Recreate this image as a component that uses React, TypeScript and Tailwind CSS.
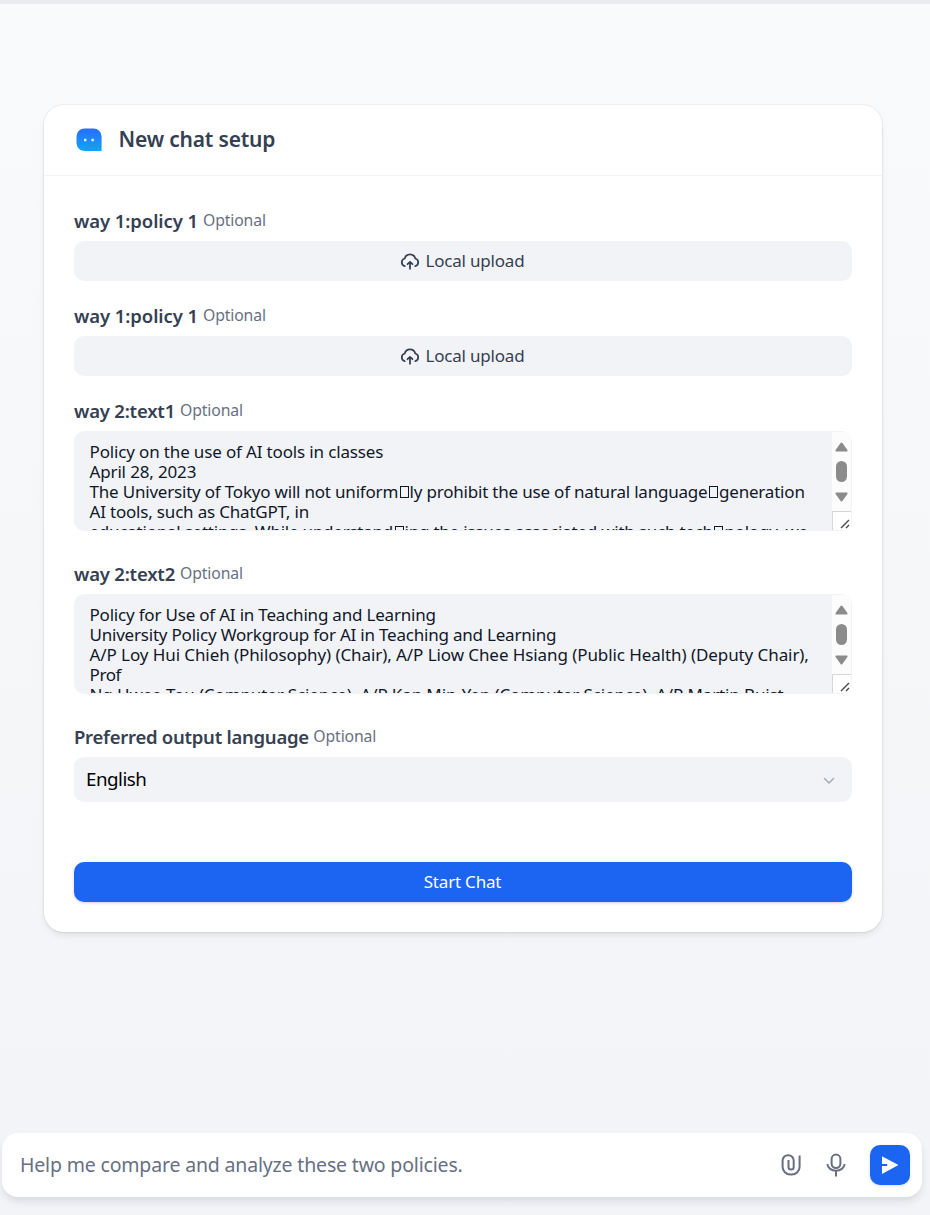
import React from 'react';

const Tofu = () => (
  <span className="ml-[1.5px] mr-[1px] inline-block h-[12px] w-[9px] border border-[#101828] align-baseline" />
);

function Label({ text, className }: { text: string; className: string }) {
  return (
    <div className="flex h-[30px] items-center text-[#354052]">
      <span className={`whitespace-nowrap text-[18.5px] font-semibold ${className}`}>{text}</span>
      <span className="-mt-px text-[15.75px] tracking-[-0.13px] text-[#676f83]">Optional</span>
    </div>
  );
}

const UploadIcon = () => (
  <svg className="h-5 w-5" viewBox="0 0 20 20" fill="none" stroke="currentColor" strokeWidth="1.75" strokeLinecap="round" strokeLinejoin="round">
    <path d="M4.7 15.2A4 4 0 0 1 4.7 7.5 5.45 5.45 0 0 1 15.3 7.5 4 4 0 0 1 15.3 15.2" />
    <path d="M7.5 13.2 10 10.9l2.5 2.3M10 11.3v6.5" />
  </svg>
);

function UploadButton() {
  return (
    <button className="flex h-10 w-full items-center justify-center rounded-[10px] bg-[#f2f3f7] text-[17px] tracking-[-0.2px] text-[#354052]">
      <UploadIcon />
      <span className="mr-[1.5px] ml-[5.5px]">Local upload</span>
    </button>
  );
}

function TextBox({ children }: { children: React.ReactNode }) {
  return (
    <div className="flex h-[100px] overflow-hidden rounded-[10px] bg-[#f2f3f7]">
      <div className="mb-px flex-1 overflow-hidden pt-[11px] pl-[15.5px] text-[17px] leading-[20px] text-[#101828]">
        {children}
      </div>
      <div className="my-px mr-px flex w-[19px] flex-col items-center bg-[#fcfcfc]">
        <svg className="mt-[10px] h-[10px] w-[13px]" viewBox="0 0 13 10" fill="#8b8b8b">
          <path d="M5.6 1Q6.5 0 7.4 1L12.4 8Q13 9.5 11.8 9.5H1.2Q0 9.5.6 8Z" />
        </svg>
        <div className="mt-[9px] h-[21px] w-[11px] rounded-full bg-[#8b8b8b]" />
        <svg className="mt-[10px] h-[10px] w-[13px]" viewBox="0 0 13 10" fill="#8b8b8b">
          <path d="M5.6 9Q6.5 10 7.4 9L12.4 2Q13 .5 11.8 .5H1.2Q0 .5.6 2Z" />
        </svg>
        <div className="mt-[9px] flex w-full flex-1 items-end justify-end border-t border-l border-[#d6d6d6] bg-white">
          <svg className="mr-[1px] mb-[1px] h-[10px] w-[10px]" viewBox="0 0 10 10" stroke="#4a4a4a" strokeWidth="1.4">
            <path d="M1 9 9 1M6 9 9 6" />
          </svg>
        </div>
      </div>
    </div>
  );
}

const Line = ({ className, children }: { className: string; children: React.ReactNode }) => (
  <div className={`h-5 whitespace-nowrap ${className}`}>{children}</div>
);

export default function App() {
  return (
    <div className="flex h-[1215px] w-[930px] flex-col overflow-hidden border-t-4 border-[#e9ebf0] bg-linear-to-b from-[#f9fafb] to-[#f2f4f7] font-['Noto_Sans','Open_Sans',sans-serif]">
      <main className="mt-[101px] ml-[44px] h-[827px] w-[838px] rounded-[20px] bg-white shadow-[0_0_0_1px_rgba(16,24,40,0.05),0_4px_8px_-2px_rgba(16,24,40,0.10),0_2px_4px_-2px_rgba(16,24,40,0.06)]">
        <header className="flex h-[71px] items-center border-b border-[#f2f3f6] pl-[32px]">
          <svg className="h-[26px] w-[26px]" viewBox="0 0 26 26">
            <defs>
              <linearGradient id="bot" x1="0" y1="0" x2="0" y2="1">
                <stop offset="0" stopColor="#266dff" />
                <stop offset="1" stopColor="#12a5f2" />
              </linearGradient>
            </defs>
            <path d="M8.5 1.5H17.5A8 8 0 0 1 25.6 9.5V24H8.5A8 8 0 0 1 .5 16V9.5A8 8 0 0 1 8.5 1.5Z" fill="url(#bot)" />
            <path d="M8 11.8h2.4v2.4H8zM15.4 11.8h2.4v2.4h-2.4z" fill="#e6f1ff" />
          </svg>
          <h1 className="-mt-[2px] ml-[16.5px] text-[21px] leading-7 font-semibold tracking-[-0.18px] text-[#354052]">New chat setup</h1>
        </header>

        <div className="px-[30px] pt-[30px]">
          <Label text="way 1:policy 1" className="mr-[5px] tracking-[-0.08px]" />
          <div className="mt-[5px]"><UploadButton /></div>

          <div className="mt-[20px]"><Label text="way 1:policy 1" className="mr-[5px] tracking-[-0.08px]" /></div>
          <div className="mt-[5px]"><UploadButton /></div>

          <div className="mt-[20px]"><Label text="way 2:text1" className="mr-[5px] tracking-[-0.2px]" /></div>
          <div className="mt-[5px]">
            <TextBox>
              <Line className="tracking-[-0.15px]">Policy on the use of AI tools in classes</Line>
              <Line className="tracking-[-0.15px]">April 28, 2023</Line>
              <Line className="tracking-[-0.2px]">The University of Tokyo will not uniform<Tofu />ly prohibit the use of natural language<Tofu />generation</Line>
              <Line className="tracking-[-0.19px]">AI tools, such as ChatGPT, in</Line>
              <Line className="tracking-[-0.23px]">educational settings. While understand<Tofu />ing the issues associated with such tech<Tofu />nology, we</Line>
            </TextBox>
          </div>

          <div className="mt-[28px]"><Label text="way 2:text2" className="mr-[5px] tracking-[-0.2px]" /></div>
          <div className="mt-[5px]">
            <TextBox>
              <Line className="tracking-[-0.2px]">Policy for Use of AI in Teaching and Learning</Line>
              <Line className="tracking-[-0.21px]">University Policy Workgroup for AI in Teaching and Learning</Line>
              <Line className="tracking-[-0.08px]">A/P Loy Hui Chieh (Philosophy) (Chair), A/P Liow Chee Hsiang (Public Health) (Deputy Chair),</Line>
              <Line className="tracking-[-0.4px]">Prof</Line>
              <Line className="tracking-[-0.12px]">Ng Hwee Tou (Computer Science), A/P Kan Min-Yen (Computer Science), A/P Martin Buist</Line>
            </TextBox>
          </div>

          <div className="mt-[28px]"><Label text="Preferred output language" className="mr-[4.5px] tracking-[-0.26px]" /></div>
          <div className="mt-[5px] flex h-[45px] items-center justify-between rounded-[10px] bg-[#f2f3f7] pr-[17px] pl-[12px]">
            <span className="text-[18.75px] tracking-[-0.5px] text-black">English</span>
            <svg className="mt-[3px] h-3 w-3" viewBox="0 0 12 12" fill="none" stroke="#a6abb5" strokeWidth="1.5" strokeLinecap="round" strokeLinejoin="round">
              <path d="M1.5 3.5 6 8l4.5-4.5" />
            </svg>
          </div>

          <button className="mt-[60px] flex h-10 w-full items-center justify-center rounded-[10px] bg-[#1c64f2] pr-px text-[17px] tracking-[-0.2px] text-white shadow-[0_1px_3px_rgba(16,24,40,0.2)]">
            Start Chat
          </button>
        </div>
      </main>

      <footer className="mt-[201px] ml-[2px] flex h-[64px] w-[920px] items-center rounded-[16px] bg-white pr-[12px] pl-[18px] shadow-[0_5px_10px_-2px_rgba(16,24,40,0.14)]">
        <span className="flex-1 text-[19.5px] tracking-[-0.17px] text-[#676f83]">Help me compare and analyze these two policies.</span>
        <svg className="h-[22px] w-[20px]" viewBox="0 0 20 22" fill="none" stroke="#676f83" strokeWidth="2">
          <path d="M18.6 1.6v11.2a7.8 7.8 0 0 1-7.8 7.8H9.4A7.8 7.8 0 0 1 1.6 12.8V6.6A5.4 5.4 0 0 1 7 1.2h.3A5.4 5.4 0 0 1 12.7 6.6v6.4a2.6 2.6 0 0 1-5.2 0V6" />
        </svg>
        <svg className="-mt-px ml-[24.5px] h-[24px] w-[20px]" viewBox="0 0 20 24" fill="none" stroke="#676f83" strokeWidth="2">
          <rect x="5.6" y="1.6" width="8.8" height="13.4" rx="4.4" />
          <path d="M1.3 11a8.75 7.6 0 0 0 17.4 0M10 18v5.5" />
        </svg>
        <button className="ml-[24.5px] flex h-10 w-10 items-center justify-center rounded-[10px] bg-[#1c64f2] shadow-[0_1px_3px_rgba(16,24,40,0.15)]">
          <svg className="h-[20px] w-[18px]" viewBox="0 0 18 20" fill="white">
            <path d="M1 1.2 17.4 10 1 18.9V11H6.2V9H1Z" />
          </svg>
        </button>
      </footer>
    </div>
  );
}
